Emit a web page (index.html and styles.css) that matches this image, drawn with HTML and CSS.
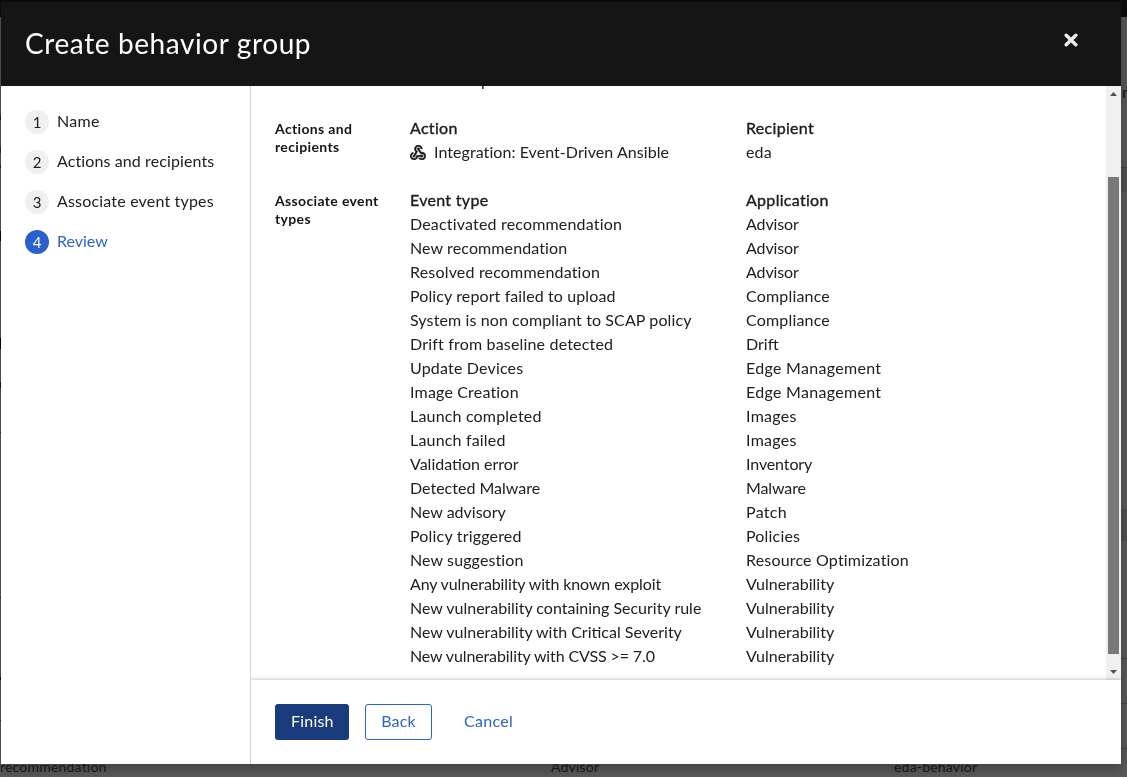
FILE: index.html
```html
<!DOCTYPE html>
<html lang="en">
<head>
<meta charset="utf-8">
<title>Create behavior group</title>
<link rel="stylesheet" href="styles.css">
</head>
<body>
<div class="page">
  <div class="masthead"></div>
  <div class="page-body">
    <div class="page-sides">
      <div class="page-left"></div>
      <div class="page-edge"><span>n</span><i class="r1"></i><i class="r2"></i><i class="r3"></i><i class="r3"></i><i></i></div>
    </div>
    <div class="table-row"><span>recommendation</span><span>Advisor</span><span>eda-behavior</span></div>
  </div>
</div>
<div class="modal">
  <header class="header">
    <h1>Create behavior group</h1>
    <svg class="close" viewBox="0 0 14 14"><path d="M2.2 2.2 11.8 11.8M11.8 2.2 2.2 11.8"/></svg>
  </header>
  <div class="main">
    <nav class="steps">
      <div class="step"><b>1</b><span>Name</span></div>
      <div class="step"><b>2</b><span class="snug">Actions and recipients</span></div>
      <div class="step"><b>3</b><span class="near">Associate event types</span></div>
      <div class="step current"><b>4</b><span class="plain">Review</span></div>
    </nav>
    <div class="content">
      <div class="scroll">
        <div class="review">
          <div class="previous">p</div>
          <section class="group">
            <h2>Actions and recipients</h2>
            <div class="grid">
              <strong>Action</strong><strong>Recipient</strong>
              <span class="integration"><svg viewBox="2 2 20 19"><path d="M10 15h5.88c.27-.31.67-.5 1.12-.5.83 0 1.5.67 1.5 1.5s-.67 1.5-1.5 1.5c-.44 0-.84-.19-1.12-.5H11.9c-.46 2.28-2.48 4-4.9 4-2.76 0-5-2.24-5-5 0-2.42 1.72-4.44 4-4.9v2.07C4.84 13.58 4 14.7 4 16c0 1.65 1.35 3 3 3s3-1.35 3-3v-1zm2.5-11c1.65 0 3 1.35 3 3h2c0-2.76-2.24-5-5-5s-5 2.24-5 5c0 1.43.6 2.71 1.55 3.62l-2.35 3.9c-.68.14-1.2.75-1.2 1.48 0 .83.67 1.5 1.5 1.5s1.5-.67 1.5-1.5c0-.16-.02-.31-.07-.45l3.38-5.63C10.49 9.61 9.5 8.42 9.5 7c0-1.65 1.35-3 3-3zm4.5 9c-.64 0-1.23.2-1.72.54l-3.05-5.07C11.53 8.35 11 7.74 11 7c0-.83.67-1.5 1.5-1.5S14 6.17 14 7c0 .15-.02.29-.06.43l2.19 3.65c.28-.05.57-.08.87-.08 2.76 0 5 2.24 5 5s-2.24 5-5 5c-1.85 0-3.47-1.01-4.33-2.5h2.67c.48.32 1.05.5 1.66.5 1.65 0 3-1.35 3-3s-1.35-3-3-3z"/></svg>Integration: Event-Driven Ansible</span><span class="snug">eda</span>
            </div>
          </section>
          <section class="group">
            <h2>Associate event types</h2>
            <div class="grid">
              <strong>Event type</strong><strong>Application</strong>
              <span class="near">Deactivated recommendation</span><span class="tight">Advisor</span>
              <span class="snug">New recommendation</span><span class="tight">Advisor</span>
              <span class="near">Resolved recommendation</span><span class="tight">Advisor</span>
              <span class="snug">Policy report failed to upload</span><span class="near">Compliance</span>
              <span class="snug">System is non compliant to SCAP policy</span><span class="near">Compliance</span>
              <span class="near">Drift from baseline detected</span><span class="plain">Drift</span>
              <span class="near">Update Devices</span><span>Edge Management</span>
              <span class="near">Image Creation</span><span>Edge Management</span>
              <span class="near">Launch completed</span><span>Images</span>
              <span class="near">Launch failed</span><span>Images</span>
              <span class="plain">Validation error</span><span class="tight">Inventory</span>
              <span class="plain">Detected Malware</span><span class="tight">Malware</span>
              <span class="plain">New advisory</span><span>Patch</span>
              <span class="near">Policy triggered</span><span class="near">Policies</span>
              <span class="snug">New suggestion</span><span class="near">Resource Optimization</span>
              <span class="tight">Any vulnerability with known exploit</span><span class="plain">Vulnerability</span>
              <span class="plain">New vulnerability containing Security rule</span><span class="plain">Vulnerability</span>
              <span class="plain">New vulnerability with Critical Severity</span><span class="plain">Vulnerability</span>
              <span class="tight">New vulnerability with CVSS &gt;= 7.0</span><span class="plain">Vulnerability</span>
            </div>
          </section>
        </div>
        <div class="scrollbar">
          <svg viewBox="0 0 7 4"><path d="M0 4 3.5 0 7 4z"/></svg>
          <div class="thumb"></div>
          <svg viewBox="0 0 7 4"><path d="M0 0 3.5 4 7 0z"/></svg>
        </div>
      </div>
      <footer class="footer">
        <button class="btn primary">Finish</button>
        <button class="btn secondary">Back</button>
        <button class="btn link">Cancel</button>
      </footer>
    </div>
  </div>
</div>
</body>
</html>
```
FILE: styles.css
```css
* { box-sizing: border-box; }
body { margin: 0; overflow: hidden; font: 16px/24px Lato, sans-serif; letter-spacing: .3px; color: #202020; }
.near { letter-spacing: .18px; }
.snug { letter-spacing: .11px; }
.plain { letter-spacing: 0; }
.tight { letter-spacing: -.12px; }
.page { height: 777px; display: flex; flex-direction: column; background: #595959; overflow: hidden; }
.masthead { height: 17px; flex: none; background: #0c0c0c; }
.page-body { flex: 1; display: flex; flex-direction: column; }
.page-sides { height: 738px; flex: none; display: flex; justify-content: space-between; }
.page-left { width: 1px; background:
  linear-gradient(#222, #222) 0 98px / 1px 5px no-repeat,
  linear-gradient(#333, #333) 0 130px / 1px 6px no-repeat,
  linear-gradient(#0d2350, #0d2350) 0 148px / 1px 3px no-repeat,
  linear-gradient(#080808, #080808) 0 214px / 1px 10px no-repeat,
  linear-gradient(#080808, #080808) 0 321px / 1px 11px no-repeat,
  linear-gradient(#151515, #151515) 0 365px / 1px 6px no-repeat,
  linear-gradient(#222, #222) 0 415px / 1px 1px no-repeat,
  linear-gradient(#222, #222) 0 580px / 1px 1px no-repeat,
  linear-gradient(#151515, #151515) 0 660px / 1px 3px no-repeat,
  linear-gradient(#222, #222) 0 703px / 1px 1px no-repeat; }
.page-edge { width: 6px; display: flex; flex-direction: column; overflow: hidden; }
.page-edge span { height: 150px; flex: none; padding: 63px 0 0 1px; color: #111; }
.page-edge i { flex: none; border-top: 1px solid #434343; }
.page-edge .r1 { height: 25px; background: #505050; }
.page-edge .r2 { height: 466px; border-top: 0; background: linear-gradient(#505050, #505050) 0 317px / 6px 32px no-repeat; }
.page-edge .r3 { height: 45px; }
.table-row { display: grid; grid-template-columns: 551px 343px 1fr; font-size: 14px; color: #181818; letter-spacing: .2px; }
.modal { position: absolute; left: 1px; top: 2px; width: 1120px; height: 762px; display: flex; flex-direction: column; background: #fff; box-shadow: 0 4px 12px rgba(3,3,3,.3); }
.header { height: 84px; flex: none; display: flex; justify-content: space-between; padding: 24px 43px 0 24px; background: #151515; color: #fff; }
.header h1 { margin: -1px 0 0; font-size: 28px; line-height: 36px; font-weight: 400; letter-spacing: .6px; will-change: transform; }
.close { width: 14px; height: 14px; margin-top: 7px; fill: none; stroke: #f0f0f0; stroke-width: 3.4; stroke-linecap: round; }
.main { flex: 1; min-height: 0; display: flex; }
.steps { width: 250px; flex: none; display: flex; flex-direction: column; gap: 16px; padding: 24px 0 0 24px; border-right: 1px solid #d2d2d2; will-change: transform; }
.step { display: flex; gap: 8px; line-height: 22px; white-space: nowrap; }
.step b { width: 24px; height: 24px; border-radius: 50%; background: #f0f0f0; text-align: center; line-height: 24px; font-weight: 400; font-size: 15px; letter-spacing: 0; }
.current { color: #2b64ce; }
.current b { background: #2b5fcb; color: #fff; }
.content { flex: 1; min-width: 0; display: flex; flex-direction: column; }
.scroll { height: 594px; flex: none; display: flex; overflow: hidden; }
.review { flex: 1; padding-left: 24px; will-change: transform; }
.previous { height: 24px; margin: -18px 0 24px; padding-left: 206px; }
.group { display: flex; margin-bottom: 24px; }
.group h2 { margin: 4px 0 0; width: 135px; flex: none; padding-right: 20px; font-size: 14px; line-height: 18px; font-weight: 700; letter-spacing: .35px; color: #151515; }
.grid { display: grid; grid-template-columns: 336px 300px; grid-auto-rows: 24px; white-space: nowrap; }
.grid strong { font-weight: 400; -webkit-text-stroke: .35px #151515; }
.integration { display: flex; align-items: center; gap: 8px; letter-spacing: .06px; }
.integration svg { width: 16px; height: 15px; fill: #151515; stroke: #151515; stroke-width: .5; }
.scrollbar { width: 15px; flex: none; display: flex; flex-direction: column; align-items: center; background: #f0f0f0; padding-top: 6px; }
.scrollbar svg { width: 7px; height: 4px; fill: #505050; }
.thumb { width: 11px; height: 477px; margin: 81px 0 16px; background: #797979; }
.footer { flex: 1; position: relative; display: flex; gap: 16px; padding: 24px; background: #fff; box-shadow: 0 -1px 3px rgba(3,3,3,.22); clip-path: inset(-6px 0 0 0); }
.btn { height: 36px; border: 1px solid transparent; border-radius: 3px; padding: 0 15px 2px; font: inherit; letter-spacing: .2px; background: none; color: #2b64ce; }
.primary { width: 74px; background: #1a3c7c; color: #fff; }
.secondary { width: 67px; border-color: #2b64ce; }
.link { letter-spacing: .3px; }
```
